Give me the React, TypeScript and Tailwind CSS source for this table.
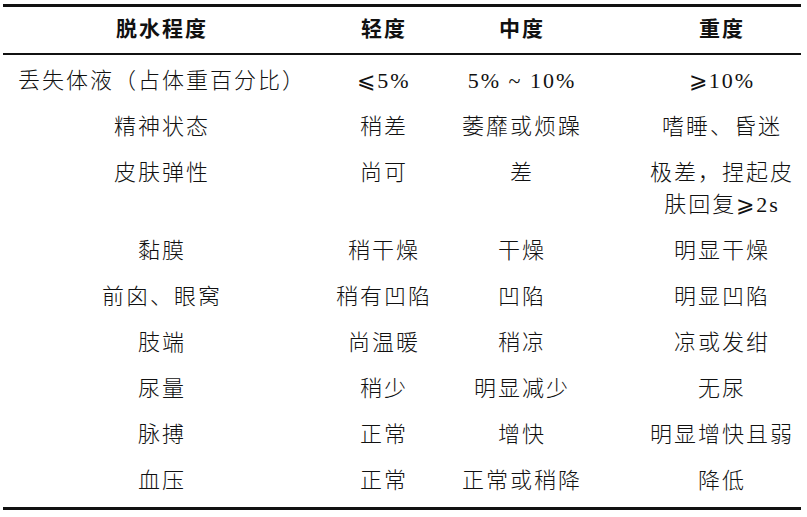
const rows: [string, string, string, string[]][] = [
  ["丢失体液（占体重百分比）", "⩽5%", "5% ~ 10%", ["⩾10%"]],
  ["精神状态", "稍差", "萎靡或烦躁", ["嗜睡、昏迷"]],
  ["皮肤弹性", "尚可", "差", ["极差，捏起皮", "肤回复⩾2s"]],
  ["黏膜", "稍干燥", "干燥", ["明显干燥"]],
  ["前囟、眼窝", "稍有凹陷", "凹陷", ["明显凹陷"]],
  ["肢端", "尚温暖", "稍凉", ["凉或发绀"]],
  ["尿量", "稍少", "明显减少", ["无尿"]],
  ["脉搏", "正常", "增快", ["明显增快且弱"]],
  ["血压", "正常", "正常或稍降", ["降低"]],
];

const grid = "grid grid-cols-[318px_126px_150px_204px]";

export default function App() {
  return (
    <div
      className="min-h-screen bg-white pl-[3px] pt-[4px] text-[#111]"
      style={{ fontFamily: '"Liberation Serif", "Noto Sans CJK SC", serif' }}
    >
      <div className="w-[798px] border-t-[3px] border-b-[3px] border-[#111] pb-[3px]">
        {/* header */}
        <div className={`${grid} h-[48px] items-center border-b-[2px] border-[#111] text-[21px] font-bold tracking-[2px]`}>
          <div className="text-center">脱水程度</div>
          <div className="text-center">轻度</div>
          <div className="text-center">中度</div>
          <div className="pl-[46px] text-center">重度</div>
        </div>

        <div className="pt-[3px]">
          {rows.map((r, i) => (
            <div key={i} className={`${grid} py-[7px] text-[22px] font-light leading-[32px] tracking-[2px]`}>
              <div className="text-center">{r[0]}</div>
              <div className="text-center">{r[1]}</div>
              <div className="text-center">{r[2]}</div>
              <div className="pl-[46px] text-center">
                {r[3].map((line, j) => (
                  <div key={j}>{line}</div>
                ))}
              </div>
            </div>
          ))}
        </div>
      </div>
    </div>
  );
}
